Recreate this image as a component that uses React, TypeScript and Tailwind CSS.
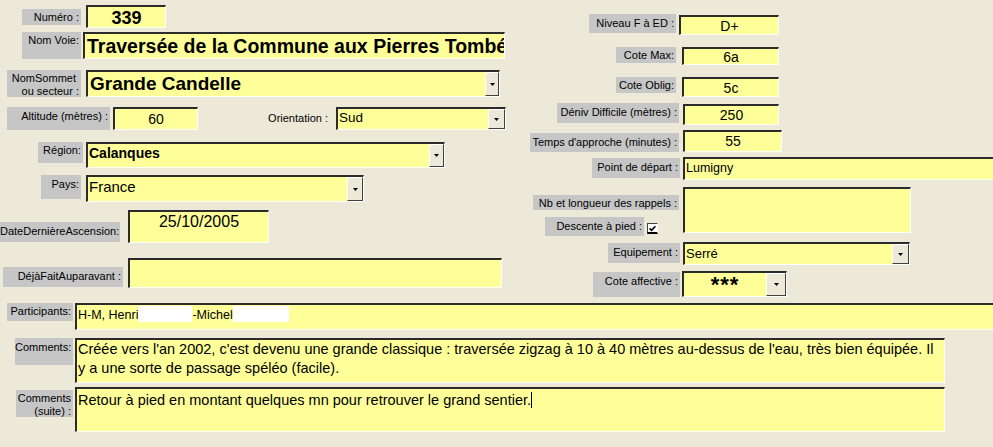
import type { ReactNode } from 'react'

type Box = { className?: string; children?: ReactNode }

const sunken =
    'bg-[#ffff99] border-t-2 border-l-2 border-t-[#2b2b2b] border-l-[#2b2b2b] border-b border-r border-b-white border-r-white'

function Lbl({ className = '', children }: Box) {
    return (
        <div className={`shrink-0 bg-[#c6c6c6] text-[11px] leading-[13px] text-right pr-[2px] pt-[2px] whitespace-nowrap ${className}`}>
            {children}
        </div>
    )
}

function DropBtn({ className = '' }: { className?: string }) {
    return (
        <div className={`shrink-0 h-full flex items-center justify-center bg-[#ece9d8] border-t border-l border-t-white border-l-white border-b border-r border-b-[#404040] border-r-[#404040] ${className}`}>
            <svg width="5" height="3" viewBox="0 0 5 3">
                <path d="M0 0h5L2.5 3z" fill="#000" />
            </svg>
        </div>
    )
}

function Field({ className = '', children, drop }: Box & { drop?: string }) {
    return (
        <div className={`shrink-0 flex overflow-hidden ${sunken} ${className}`}>
            <div className="flex-1 min-w-0 overflow-hidden whitespace-nowrap">{children}</div>
            {drop && <DropBtn className={drop} />}
        </div>
    )
}

export default function App() {
    return (
        <div className="w-[993px] h-[447px] overflow-hidden bg-[#ece9d8] text-black font-['Liberation_Sans',Arial,sans-serif]">
            <div className="flex h-[300px]">
                {/* left column */}
                <div className="w-[520px] shrink-0">
                    <div className="flex items-start mt-[5px]">
                        <Lbl className="ml-[22px] mt-[4px] w-[59px] h-[16px]">Numéro :</Lbl>
                        <Field className="ml-[5px] w-[80px] h-[23px]">
                            <div className="text-center font-bold text-[18px] leading-[20px] pt-[1px]">339</div>
                        </Field>
                    </div>
                    <div className="flex items-start mt-[4px]">
                        <Lbl className="ml-[22px] w-[59px] h-[27px]">Nom Voie:</Lbl>
                        <Field className="ml-[2px] w-[422px] h-[27px]">
                            <div className="font-bold text-[19.5px] leading-[23px] pl-[2px] pt-[1px]">Traversée de la Commune aux Pierres Tombées</div>
                        </Field>
                    </div>
                    <div className="flex items-start mt-[11px]">
                        <Lbl className="ml-[7px] w-[74px] h-[27px] leading-[12px]">
                            <div className="pr-[3px]">NomSommet</div>
                            <div>ou secteur :</div>
                        </Lbl>
                        <Field className="ml-[5px] w-[414px] h-[27px]" drop="w-[14px]">
                            <div className="font-bold text-[19px] leading-[22px] pl-[2px] pt-[1px]">Grande Candelle</div>
                        </Field>
                    </div>
                    <div className="flex items-start mt-[10px]">
                        <Lbl className="ml-[7px] w-[103px] h-[23px] pt-[3px]">Altitude (mètres) :</Lbl>
                        <Field className="ml-[3px] w-[85px] h-[23px]">
                            <div className="text-center text-[14px] leading-[16px] pt-[2px]">60</div>
                        </Field>
                        <div className="w-[138px] shrink-0 text-right pr-[8px] mt-[5px] text-[11px] leading-[13px]">Orientation :</div>
                        <Field className="w-[170px] h-[23px]" drop="w-[17px]">
                            <div className="text-[13.5px] leading-[16px] pl-[1px] pt-[1px]">Sud</div>
                        </Field>
                    </div>
                    <div className="flex items-start mt-[12px]">
                        <Lbl className="ml-[38px] w-[45px] h-[21px]">Région:</Lbl>
                        <Field className="ml-[3px] w-[359px] h-[26px]" drop="w-[15px]">
                            <div className="font-bold text-[14px] leading-[16px] pl-[1px] pt-[1px]">Calanques</div>
                        </Field>
                    </div>
                    <div className="flex items-start mt-[7px]">
                        <Lbl className="ml-[41px] w-[40px] h-[24px] pt-[3px]">Pays:</Lbl>
                        <Field className="ml-[5px] w-[278px] h-[27px]" drop="w-[16px]">
                            <div className="text-[15px] leading-[17px] pl-[1px] pt-[1px]">France</div>
                        </Field>
                    </div>
                    <div className="flex items-start mt-[8px]">
                        <Lbl className="mt-[12px] w-[120px] h-[20px] pt-[3px]">DateDernièreAscension:</Lbl>
                        <Field className="ml-[8px] w-[141px] h-[33px]">
                            <div className="text-center text-[16px] leading-[18px] pt-[1px]">25/10/2005</div>
                        </Field>
                    </div>
                    <div className="flex items-start mt-[15px]">
                        <Lbl className="ml-[3px] mt-[9px] w-[120px] h-[20px] pt-[3px]">DéjàFaitAuparavant :</Lbl>
                        <Field className="ml-[5px] w-[374px] h-[30px]" />
                    </div>
                </div>

                {/* right column */}
                <div className="flex-1 min-w-0">
                    <div className="flex items-start mt-[14px]">
                        <Lbl className="ml-[69px] w-[87px] h-[19px] pt-[3px]">Niveau F à ED :</Lbl>
                        <Field className="ml-[3px] mt-[1px] w-[100px] h-[20px]">
                            <div className="text-center text-[14px] leading-[16px] pt-[1px]">D+</div>
                        </Field>
                    </div>
                    <div className="flex items-start mt-[12px]">
                        <Lbl className="ml-[96px] w-[60px] h-[16px] pt-[1px]">Cote Max:</Lbl>
                        <Field className="ml-[6px] w-[97px] h-[18px]">
                            <div className="text-center text-[14px] leading-[16px]">6a</div>
                        </Field>
                    </div>
                    <div className="flex items-start mt-[12px]">
                        <Lbl className="ml-[96px] w-[60px] h-[16px] pt-[1px]">Cote Oblig:</Lbl>
                        <Field className="ml-[6px] w-[97px] h-[20px]">
                            <div className="text-center text-[14px] leading-[16px] pt-[1px]">5c</div>
                        </Field>
                    </div>
                    <div className="flex items-start mt-[6px]">
                        <Lbl className="ml-[37px] w-[122px] h-[20px] pt-[3px]">Déniv Difficile (mètres) :</Lbl>
                        <Field className="ml-[4px] mt-[1px] w-[96px] h-[21px]">
                            <div className="text-center text-[14px] leading-[16px] pt-[1px]">250</div>
                        </Field>
                    </div>
                    <div className="flex items-start mt-[5px]">
                        <Lbl className="ml-[10px] mt-[3px] w-[149px] h-[19px] pt-[3px]">Temps d'approche (minutes) :</Lbl>
                        <Field className="ml-[4px] w-[99px] h-[22px]">
                            <div className="text-center text-[14px] leading-[16px] pt-[1px]">55</div>
                        </Field>
                    </div>
                    <div className="flex items-start mt-[5px]">
                        <Lbl className="ml-[72px] mt-[1px] w-[88px] h-[20px] pt-[3px]">Point de départ :</Lbl>
                        <Field className="ml-[3px] w-[320px] h-[23px]">
                            <div className="text-[12.5px] leading-[15px] pl-[1px] pt-[2px]">Lumigny</div>
                        </Field>
                    </div>
                    <div className="flex items-start mt-[7px]">
                        <div className="w-[160px] shrink-0 flex flex-col">
                            <Lbl className="ml-[13px] mt-[8px] w-[146px] h-[15px] pt-[1px]">Nb et longueur des rappels :</Lbl>
                            <div className="flex items-start mt-[7px]">
                                <Lbl className="ml-[25px] w-[99px] h-[19px] pt-[3px]">Descente à pied :</Lbl>
                                <div className="shrink-0 ml-[3px] mt-[6px] w-[11px] h-[11px] bg-white border-t border-l border-t-[#404040] border-l-[#404040] border-b-2 border-r border-b-black border-r-white flex items-center justify-center">
                                    <svg width="7" height="7" viewBox="0 0 7 7">
                                        <path d="M0.6 3.4 L2.6 5.4 L6.4 1.2" stroke="#000" strokeWidth="1.6" fill="none" />
                                    </svg>
                                </div>
                            </div>
                        </div>
                        <Field className="ml-[3px] w-[228px] h-[46px]" />
                    </div>
                    <div className="flex items-start mt-[6px]">
                        <Lbl className="ml-[88px] mt-[1px] w-[72px] h-[20px] pt-[3px]">Equipement :</Lbl>
                        <Field className="ml-[3px] w-[227px] h-[23px]" drop="w-[17px]">
                            <div className="text-[13px] leading-[16px] pl-[1px] pt-[2px]">Serré</div>
                        </Field>
                    </div>
                    <div className="flex items-start mt-[6px]">
                        <Lbl className="ml-[73px] mt-[1px] w-[87px] h-[25px] pt-[3px]">Cote affective :</Lbl>
                        <Field className="ml-[2px] w-[105px] h-[26px]" drop="w-[20px]">
                            <div className="text-center font-bold text-[22px] leading-[22px] tracking-[1px] pt-[1px]">***</div>
                        </Field>
                    </div>
                </div>
            </div>

            {/* bottom rows */}
            <div className="flex items-start mt-[3px]">
                <Lbl className="ml-[7px] w-[66px] h-[18px] pt-[2px]">Participants:</Lbl>
                <Field className="ml-[2px] w-[930px] h-[27px]">
                    <div className="flex items-start text-[12.5px] leading-[16px] pl-[1px] pt-[1px]">
                        <span className="pt-[1px]">H-M, Henri</span>
                        <span className="inline-block w-[54px] h-[16px] bg-white" />
                        <span className="pt-[1px]">-Michel</span>
                        <span className="inline-block w-[56px] h-[16px] bg-white" />
                    </div>
                </Field>
            </div>
            <div className="flex items-start mt-[8px]">
                <Lbl className="ml-[15px] w-[58px] h-[27px] pt-[3px]">Comments:</Lbl>
                <Field className="ml-[2px] w-[870px] h-[45px]">
                    <div className="text-[14.5px] leading-[19px] pl-[1px]">
                        <div>Créée vers l'an 2002, c'est devenu une grande classique : traversée zigzag à 10 à 40 mètres au-dessus de l'eau, très bien équipée. Il</div>
                        <div>y a une sorte de passage spéléo (facile).</div>
                    </div>
                </Field>
            </div>
            <div className="flex items-start mt-[4px]">
                <Lbl className="ml-[16px] mt-[3px] w-[57px] h-[27px] leading-[12px]">
                    <div>Comments</div>
                    <div>(suite) :</div>
                </Lbl>
                <Field className="ml-[2px] w-[870px] h-[45px]">
                    <div className="text-[14.5px] leading-[19px] pl-[1px] pt-[2px]">
                        Retour à pied en montant quelques mn pour retrouver le grand sentier.
                        <span className="inline-block w-px h-[16px] bg-black align-[-3px]" />
                    </div>
                </Field>
            </div>
        </div>
    )
}
